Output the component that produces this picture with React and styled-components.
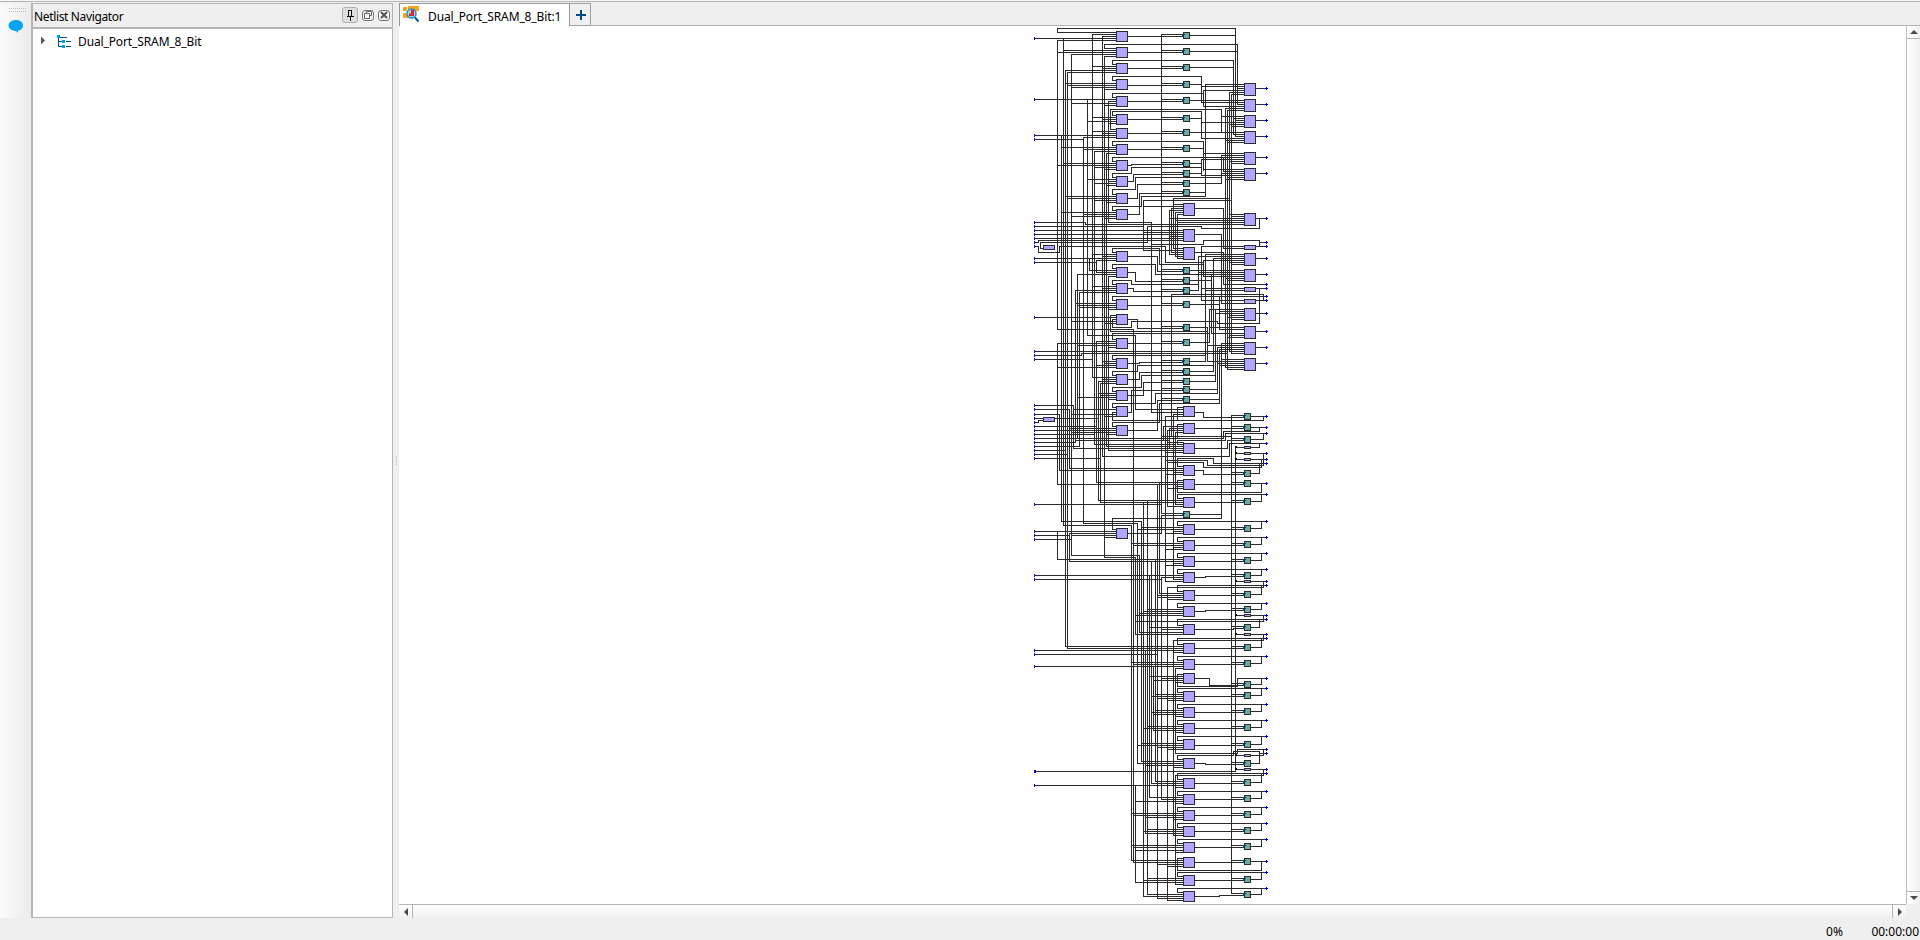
import React from "react";
import styled, { createGlobalStyle } from "styled-components";

const Global = createGlobalStyle`
  * { box-sizing: border-box; }
  body { margin: 0; background: #efefef; overflow: hidden; }
`;

const Window = styled.div`
  display: flex;
  flex-direction: column;
  width: 1920px;
  height: 940px;
  background: #efefef;
  color: #000;
  font: 12px/16px "Noto Sans", "Open Sans", sans-serif;
`;
const TopEdge = styled.div`
  height: 3px;
  flex: none;
  background: linear-gradient(#f4f4f4 1px, #b5b5b5 1px, #b5b5b5 2px, #efefef 2px);
`;
const Workspace = styled.div`
  display: flex;
  flex: 1;
  min-height: 0;
`;
const ToolStrip = styled.div`
  width: 31px;
  display: flex;
  flex-direction: column;
  align-items: center;
  padding: 5px 0 0 3px;
  background: linear-gradient(90deg, #fbfbfb, #ececec);
`;
const Navigator = styled.section`
  width: 362px;
  height: 915px;
  border: 1px solid #b5b5b5;
  border-left-width: 2px;
  background: #fff;
`;
const NavHeader = styled.header`
  height: 25px;
  display: flex;
  align-items: center;
  padding: 2px 2px 0 1px;
  background: #efefef;
  border-bottom: 2px solid #b5b5b5;
`;
const Label = styled.span`
  white-space: pre;
  flex: none;
  letter-spacing: ${(p) => p.$track || 0}px;
`;
const HeaderTools = styled.div`
  display: flex;
  align-items: center;
  gap: 4px;
  margin: -3px 0 0 auto;
`;
const ToolButton = styled.span`
  display: flex;
  align-items: center;
  justify-content: center;
  width: ${(p) => (p.$pressed ? 16 : 12)}px;
  height: ${(p) => (p.$pressed ? 16 : 11)}px;
  border: 1px solid ${(p) => (p.$pressed ? "#b0b0b0" : "#777")};
  border-radius: 3px;
  background: ${(p) => (p.$pressed ? "#dedede" : "#f4f4f4")};
`;
const TreeRow = styled.div`
  display: flex;
  align-items: center;
  height: 26px;
  padding-left: 8px;
`;
const Splitter = styled.div`
  width: 6px;
  display: flex;
  align-items: center;
  justify-content: center;
`;
const Editor = styled.main`
  flex: 1;
  display: flex;
  flex-direction: column;
  height: 915px;
`;
const TabBar = styled.div`
  display: flex;
  height: 23px;
  flex: none;
  border-bottom: 1px solid #b5b5b5;
`;
const Tab = styled.div`
  width: 171px;
  height: 24px;
  display: flex;
  align-items: center;
  gap: 9px;
  padding-left: 3px;
  background: #fff;
  border: 1px solid #999;
  border-bottom-color: #aaa;

  > span { padding-top: 3px; }
  > svg { margin-top: -2px; }
`;
const AddTab = styled.div`
  width: 21px;
  height: 23px;
  display: flex;
  align-items: center;
  justify-content: center;
  padding-left: 1px;
  border: 1px solid #a0a0a0;
  border-left: 0;
  background: #f0f0f0;
`;
const View = styled.div`
  flex: 1;
  display: flex;
  min-height: 0;
`;
const Canvas = styled.div`
  width: 1507px;
  padding-left: 621px;
  background: #fff;
  overflow: hidden;
`;
const VScroll = styled.div`
  width: 14px;
  display: flex;
  flex-direction: column;
  justify-content: space-between;
  border-left: 1px solid #bdbdbd;
  background: linear-gradient(90deg, #fff, #f0f0f0);
`;
const HScroll = styled.div`
  height: 14px;
  width: 1507px;
  flex: none;
  display: flex;
  justify-content: space-between;
  border-top: 1px solid #b5b5b5;
  background: linear-gradient(#fff, #f0f0f0);
`;
const ScrollButton = styled.div`
  width: 14px;
  height: 13px;
  display: flex;
  align-items: center;
  justify-content: center;
  border: 0 solid #b5b5b5;
  border-${(p) => p.$edge}-width: 1px;
`;
const StatusBar = styled.footer`
  height: 22px;
  flex: none;
  display: flex;
  justify-content: flex-end;
  align-items: center;
  gap: 28px;
  padding: 6px 1px 0 0;
`;

/* The schematic is laid out on a grid of thirds of a pixel. Each sheet starts
   at its own offset. A wire is "x y x y ...": a start point, then alternating
   horizontal and vertical moves. */
const sheets = [
  {
    top: 0,
    left: [33, 81, 129, 177, 228, 282, 324, 372, 420],
    mid: [], right: [189, 237, 285, 333, 396, 444],
    regs: [36, 84, 132, 183, 231, 285, 327, 375, 420], outRegs: [],
    bars: [], chips: [],
    wires: `289 37 112 25 646 349 673|510 46 646|289 43 217 450|289 49 247 450|43 55 289|289 61 112 450
289 85 253 73 652 253 673|130 91 289|112 97 289|289 103 154 450|289 109 253 450|130 55 130 450|510 94 652
289 133 277 121 640 343 673|217 139 289|247 145 289|289 151 136 450|289 157 142 450|510 142 640
289 181 277 169 544 247 673|136 190 289|142 196 289|154 202 289|253 208 289|510 193 544|544 199 673
673 193 556 450|673 211 550 259 673|289 232 277 220 550|43 238 289|289 244 265 450|154 250 289|253 256 289
510 241 673|202 238 202 450|289 286 277 274 544 355 673|217 292 289|247 298 289|202 304 289|265 310 289
510 295 544|544 307 673|289 328 271 268 604 337|217 334 289|247 340 289|43 346 289|289 352 190 450
510 337 673|604 289 673|43 358 190|124 346 124 450|289 376 277 364 550 450|124 382 289|190 388 289
289 394 223 450|289 400 259 450|510 385 550|289 424 277 412 673|130 430 289|112 436 289|223 442 289|253 448 289
324 436 334 433 495|510 430 544|673 418 544 466 673|652 205 673|673 217 628 450|673 223 634 450
673 265 616 450|673 271 622 450|640 295 673|646 301 673|628 313 673|634 319 673|616 361 673|622 367 673
550 400 673|673 406 604 490|610 412 610 454 673|628 424 673|634 430 673|550 448 673|424 43 424 450
324 49 495|324 97 495|324 145 495|324 196 495|324 244 495|324 298 495|324 340 495|324 388 495
708 205 740|708 253 740|708 301 740|708 349 740|708 412 740`,
  },
  {
    top: 435,
    left: [33, 84, 132, 258, 306, 354, 402], mid: [], midTall: [114, 192, 246],
    right: [144, 264, 312, 429],
    regs: [15, 45, 72, 306, 336, 366, 408], outRegs: [],
    bars: [[69, 240], [672, 240], [672, 366], [672, 402]], chips: [],
    wires: `112 0 112 450|124 0 124 450|130 0 130 450|136 0 136 450|142 0 142 450|154 0 154 450|190 0 190 450
202 0 202 450|217 0 217 450|223 0 223 450|247 0 247 450|253 0 253 450|259 0 259 450|265 0 265 172 394 450|424 0 424 450
616 0 616 450|622 0 622 450|628 0 628 450|634 0 634 450|289 37 277 25 334 7 544|202 43 289|265 49 289|223 55 289|259 61 289
324 49 340 28 495|510 25 544|550 0 550 13 673|604 25 673|622 37 673|616 43 673|708 25 740
289 88 277 73 346 37 604 55 510|324 100 352 58 495|136 94 289|142 100 289|223 106 289|259 112 289
289 136 277 124 364 94 556 0|510 82 556|324 148 358 85 495|124 142 289|190 148 289|154 154 289|253 160 289
628 100 460 250 490|634 106 370 256 490|460 118 490|370 124 490|490 130 454 262 490|490 136 448 268 490|490 142 466 274 490|490 148 472 280 490
524 130 610 250 673|628 148 673|634 154 673|448 160 673|466 166 673|472 172 673|460 178 673|708 160 740
43 172 196 178 460|43 184 370|382 232 382 184 544 190 718 160|43 196 490|370 202 490|43 208 490|448 214 490|43 220 490
43 232 55 226 490|69 250 61 232 382|43 244 55 262 118 244 436 292 550|55 226 55 232|394 238 550 226 718 244|718 232 740|708 244 740
673 244 544 406 673|524 208 604 415 673|524 262 610 358 740|289 262 277 250 418 298 550 286 673
217 268 289|247 274 289|43 280 289|43 292 229|289 286 229 322 289|208 280 208 316 289|324 274 412 319 495
673 268 556 450|673 274 535 376 510|673 280 580 450|550 298 550 334 673|628 292 673|634 298 673
510 316 673|535 322 673|616 340 673|622 346 673|708 280 740|708 328 740
289 310 277 298 406 328 673|574 328 574 450|289 328 172 450|289 334 265 450|324 322 346 349 495|510 346 574
289 358 277 346 334 358 535|217 364 289|247 370 289|289 376 166 450|289 382 178 450|324 370 340 379 495
289 406 277 394 740|166 415 289|172 421 289|178 427 289|265 433 289|324 421 495|510 418 598
454 450 454 388 730 406|544 370 673|556 376 673|708 370 740|718 370 718 450|708 406 740
673 433 568 450|673 439 598 450|598 394 598 439|673 445 586 450|708 445 740`,
  },
  {
    top: 870,
    left: [12, 84, 144, 192, 240, 288, 345], mid: [288, 339, 399], right: [48, 96, 144],
    regs: [42, 87, 144, 174, 204, 228, 258], outRegs: [309, 342, 378],
    bars: [[69, 321]], chips: [408, 426, 444],
    wires: `112 0 112 58 340 450|124 0 124 450|130 0 130 450|136 0 136 450|142 0 142 450|154 0 154 450|166 0 166 397
172 0 172 385 610 364 718 352|178 0 178 409|190 0 190 450|202 0 202 76 346 298 490|217 0 217 203 289|223 0 223 403 466
247 0 247 439 628 400 740|253 0 253 450|259 0 259 409 490|265 0 265 421 490|394 0 394 307 490|424 0 424 450|454 0 454 379
43 22 289|289 16 271 64 562|289 28 277 52 334 34 592 40 718 -10|154 34 289|253 40 289|324 28 352 55 495|510 52 562
289 88 277 70 568|568 0 568 97 510|574 0 574 70 673|580 0 580 184 510|586 0 586 214 510|556 0 556 154 510|229 94 289|229 94 229 450
289 100 112 450|172 106 289|265 112 289|324 100 495|43 124 622|43 136 184 130 622|43 148 217
289 148 277 136 556|247 154 289|253 160 289|229 166 289|112 172 289|324 160 358 157 495
289 196 277 184 352 166 580|247 209 289|289 215 235 450|289 221 241 450|324 208 358 187 495
289 244 277 232 364 196 586|235 250 289|241 256 289|172 262 289|265 268 289|324 256 370 217 495
289 292 277 280 406 250 592|160 298 289|289 307 277 331 472|154 313 289|253 319 289|324 307 334 241 495
289 349 277 337 418 280 598|148 355 289|118 361 289|154 367 289|259 373 289|324 361 412 271 495
598 4 673|586 10 673|628 16 673|622 22 673|634 28 673|708 10 740|568 52 673|598 58 673|628 76 673|622 82 673|708 64 740
673 100 604 450|562 106 673|673 112 592 250|673 118 598 280|628 124 673|634 130 673|708 112 740|628 0 628 124|634 0 634 130|598 0 598 58
604 148 673|562 52 562 154 673|592 160 673|598 166 673|616 0 616 172 673|622 0 622 178 673|708 160 740
510 238 592|510 268 598|43 286 160 415 454|43 298 148 450|43 313 118 450|43 325 69|105 325 235|43 337 55 331 69
43 349 229|43 361 289|43 373 223|43 385 460|43 397 166|43 409 178|43 421 136|43 433 142|43 445 241
166 391 448|424 379 634|490 292 472 331 730 319|490 313 460 450|490 319 436 450|524 307 550 322 678|693 319 740
490 343 472 385|490 349 430 391|490 355 448 415 490|490 361 442 450|490 367 466 450|524 355 678|693 352 740
490 403 472 391 616 370 740|442 397 490|436 427 490|524 415 622 391 678|693 388 730 370
634 316 634 450|646 410 646 450|648 411 673|693 412 718 400|648 430 673|693 430 740|730 430 730 466|693 448 740`,
  },
  {
    top: 1305,
    left: [219], mid: [30, 72, 126, 207, 255, 303, 351, 405], right: [],
    regs: [168], outRegs: [45, 75, 129, 210, 258, 306, 351, 408],
    bars: [], chips: [9, 375],
    wires: `43 10 241|490 34 472 10 580 25 740|436 16 562 31 730 0|442 22 550 37 724 13|148 0 148 40 490|118 0 118 46 490|460 52 490|436 58 490
524 46 550 58 678|693 55 718 25|490 76 472 112 724 85|229 0 229 82 490|112 0 112 88 490|466 94 490|442 100 490|524 88 678|693 85 740
490 130 472 118 740|235 0 235 136 490|241 0 241 142 490|466 0 466 148 490|442 0 442 154 490|524 142 678|693 139 724 118
43 148 424|424 0 424 175|324 235 424 181 495|510 178 604|289 223 277 190 604 0
124 0 124 199 364 450|190 0 190 205 352 450|130 0 130 211 334 450|253 0 253 307 346 450|154 0 154 301 358 450
43 229 289|43 241 148|289 235 148 319 490|43 253 154|154 241 289|253 247 289|112 229 112 313 490|136 0 136 450|142 0 142 450|340 0 340 450
370 142 370 450|382 136 382 450|388 361 388 450|394 319 394 450|406 313 406 450|412 88 412 450|418 82 418 415 490
490 211 472 199 740|364 217 490|352 223 490|460 229 490|436 235 490|524 223 678|693 220 724 199
490 259 472 247 740|334 265 490|340 271 490|460 277 490|436 283 490|524 271 678|693 268 724 247
490 307 472 295 740|460 325 490|436 331 490|524 319 678|693 316 724 295
490 355 472 343 740|43 361 490|490 367 424 450|460 0 460 373 490|436 0 436 379 490|524 367 556 364 678|693 361 724 343
43 373 424|490 409 472 391 740|442 450 442 397 730 379|412 421 490|412 427 490|442 433 490|524 421 678|693 418 724 391
634 0 634 450|646 0 646 450|648 13 673|693 13 740|648 379 673|693 379 740`,
  },
  {
    top: 1740,
    left: [], mid: [18, 72, 129, 177, 219, 273, 321, 369, 417], right: [],
    regs: [], outRegs: [18, 72, 132, 180, 243, 276, 324, 372, 423],
    bars: [], chips: [42, 99],
    wires: `334 0 334 450|340 0 340 450|352 0 352 450|364 0 364 450|370 0 370 450|382 0 382 450|388 0 388 450|394 0 394 450|406 0 406 450|412 0 412 450
424 0 424 450|442 0 442 450|634 0 634 450|646 0 646 450|136 0 136 139 490|142 0 142 145 490|376 151 376 450|400 199 400 391 490
490 22 472 10 740|382 28 490|370 34 490|358 40 490|346 46 490|524 34 556 31 678|693 28 724 10|648 46 673|693 46 740
346 64 730 46|490 76 472 58 740|388 82 490|424 88 490|358 0 358 97 490|346 0 346 103 490|524 88 640 85 678|693 82 718 58|648 103 673|693 103 740
490 133 472 115 740|460 450 460 121 730 103|43 151 490|460 157 490|524 145 678|693 142 724 115|43 163 412
490 181 472 169 740|334 187 490|340 193 490|43 199 490|490 205 466 450|524 193 678|693 190 724 169
490 223 472 259 652 235 740|388 229 490|424 235 490|400 241 490|466 247 490|524 235 568 256 678|693 253 724 235
490 277 472 265 740|406 283 490|394 289 490|412 295 490|442 301 490|524 289 678|693 286 724 265
490 325 472 313 740|406 331 490|394 337 490|400 343 490|466 349 490|524 337 678|693 334 724 313
490 373 472 361 740|382 379 490|370 385 490|466 397 490|524 385 678|693 382 724 361
490 421 472 409 740|364 430 490|352 436 490|412 442 490|442 448 490|524 436 678|693 433 724 409|652 460 652 448 740`,
  },
  {
    top: 2190,
    left: [], mid: [24, 84, 132, 180, 228, 276, 321, 375, 423], right: [],
    regs: [], outRegs: [30, 87, 135, 183, 231, 279, 324, 378, 423],
    bars: [], chips: [12, 54],
    wires: `466 0 466 10 652|490 28 472 16 640 4 718 40 693|718 10 740|648 16 673|693 16 730 -2|364 0 364 34 490|352 0 352 40 490|376 46 490|460 52 490
524 40 556 43 678|46 64 646 0|648 58 673|693 58 740|730 58 730 76 466 403 490|43 106 490|346 106 346 397 490
490 88 472 70 740|406 0 406 94 490|394 0 394 100 490|466 112 490|524 100 678|693 97 724 70
490 136 472 124 740|388 0 388 142 490|424 0 424 148 490|346 154 490|466 160 490|524 148 678|693 145 724 124
490 184 472 172 740|334 190 490|340 196 490|376 202 490|460 208 490|524 196 678|693 193 724 172
490 232 472 220 740|382 238 490|370 244 490|376 0 376 250 490|460 0 460 256 490|524 244 678|693 241 724 220
490 280 472 268 740|334 286 490|340 292 490|346 301 490|466 307 490|524 292 678|693 289 724 268
490 325 472 361 724 334|334 0 334 331 490|340 0 340 337 490|412 343 490|442 349 490|524 337 678|693 334 740
490 379 472 367 740|382 385 490|370 391 490|524 391 678|693 388 724 367
490 427 472 415 740|382 0 382 433 490|370 0 370 439 490|412 0 412 445 490|442 0 442 451 490|524 439 598 436 678|693 433 724 415|634 0 634 430`,
  },
];

const cell = (v) => Math.floor(v / 3);

function Wires({ top, source }) {
  let d = "";
  let ports = "";
  let pins = "";
  source.split(/[|\n]/).forEach((item) => {
    const v = item.trim().split(/\s+/).map(Number);
    const X = (n) => cell(n) + 0.5;
    const Y = (n) => cell(n + top) + 0.5;
    d += `M${X(v[0])} ${Y(v[1])}`;
    let x = v[0];
    let y = v[1];
    const edges = [[x, y]];
    for (let i = 2; i < v.length; i++) {
      if (i % 2) {
        y = v[i];
        d += `V${Y(y)}`;
      } else {
        x = v[i];
        d += `H${X(x === 740 ? 736 : x)}`;
      }
    }
    edges.push([x, y]);
    edges.forEach(([ex, ey]) => {
      const px = cell(ex);
      const py = cell(ey + top);
      if (ex === 740) ports += `M245 ${py}h3v1h-3zM246 ${py - 1}h1v3h-1z`;
      if (ex === 43) ports += `M14 ${py - 1}h1v1h-1zM15 ${py}h1v1h-1zM14 ${py + 1}h1v1h-1z`;
      if (ex === 46) ports += `M14 ${py - 1}h2v1h-1v1h1v1h-2z`;
      if (ex === 289 || ex === 490 || ex === 673) pins += `M${px - 1} ${py}h1v1h-1z`;
      if (ex === 324 || ex === 524 || ex === 708) pins += `M${px} ${py}h1v1h-1z`;
    });
  });
  return (
    <>
      <path d={d} fill="none" stroke="#2b2b2b" strokeLinecap="square" strokeWidth="1" />
      <path d={pins} fill="#003c5e" />
      <path d={ports} fill="#0000ff" />
    </>
  );
}

function Block({ x, y, w, h, fill }) {
  return <rect x={cell(x) + 0.5} y={cell(y) + 0.5} width={w - 1} height={h - 1} fill={fill} stroke="#2b2b2b" />;
}

function Register({ x, y }) {
  const bx = cell(x);
  const by = cell(y);
  const bus = x < 600 ? 141 : 211;
  return (
    <g>
      <path d={`M${bus} ${by + 2.5}H${bx + 1}`} stroke="#2b2b2b" />
      <Block x={x} y={y} w={7} h={7} fill="#6fa8a8" />
      <path d={`M${bx - 1} ${by + 2}h1v3h-1z`} fill="#004a78" />
      <path d={`M${bx} ${by + 2}h2v1h-2z`} fill="#123c4c" />
    </g>
  );
}

function Schematic() {
  const violet = "#b0a6ff";
  return (
    <svg width="270" height="884" viewBox="0 6 270 884" shapeRendering="crispEdges" display="block">
      {sheets.map((s) => (
        <Wires key={s.top} top={s.top} source={s.wires} />
      ))}
      {sheets.map((s) => (
        <g key={s.top}>
          {s.left.map((y) => <Block key={`l${y}`} x={288} y={y + s.top} w={12} h={11} fill={violet} />)}
          {s.mid.map((y) => <Block key={`m${y}`} x={489} y={y + s.top} w={12} h={11} fill={violet} />)}
          {(s.midTall || []).map((y) => <Block key={`t${y}`} x={489} y={y + s.top} w={12} h={13} fill={violet} />)}
          {s.right.map((y) => <Block key={`r${y}`} x={672} y={y + s.top} w={12} h={13} fill={violet} />)}
          {s.bars.map(([x, y]) => <Block key={`b${x}-${y}`} x={x} y={y + s.top} w={12} h={5} fill={violet} />)}
          {s.chips.map((y) => (
            <g key={`c${y}`}>
              <Block x={672} y={y + s.top} w={7} h={3} fill={violet} />
              <rect x="215" y={cell(y + s.top)} width="2" height="2" fill="#000" />
            </g>
          ))}
          {s.regs.map((y) => <Register key={`g${y}`} x={489} y={y + s.top} />)}
          {s.outRegs.map((y) => <Register key={`o${y}`} x={672} y={y + s.top} />)}
        </g>
      ))}
    </svg>
  );
}

const Arrow = ({ d }) => (
  <svg width="8" height="8" viewBox="0 0 8 8"><path d={d} fill="#4a4a4a" /></svg>
);

export default function App() {
  return (
    <Window>
      <Global />
      <TopEdge />
      <Workspace>
        <ToolStrip>
          <svg width="18" height="26" viewBox="0 0 18 26">
            <path d="M1 .5h17M1 3.5h17" stroke="#bdbdbd" strokeDasharray="1 1" />
            <path d="M8 12C3.500 12 .5 14.500 .5 17.500S4 23 8 23l2 2v-2.300c3-.5 5-2.500 5-5.200C15 14.500 12.500 12 8 12z" fill="#05a5f5" />
          </svg>
        </ToolStrip>
        <Navigator>
          <NavHeader>
            <Label $track={-0.35}>Netlist Navigator</Label>
            <HeaderTools>
              <ToolButton $pressed>
                <svg width="8" height="11" viewBox="0 0 8 11" shapeRendering="crispEdges">
                  <path d="M2.500 .5h3v6h-3zM.5 6.500h7M4.500 7v4M5.500 1v5" fill="none" stroke="#111" />
                </svg>
              </ToolButton>
              <ToolButton>
                <svg width="8" height="8" viewBox="0 0 8 8">
                  <path d="M2.500 2.500v-2h5v4h-2M.5 2.500h5v5h-5z" fill="none" stroke="#666" />
                </svg>
              </ToolButton>
              <ToolButton>
                <svg width="8" height="8" viewBox="0 0 8 8">
                  <path d="M1 1l6 6M7 1l-6 6" stroke="#555" strokeWidth="2" />
                </svg>
              </ToolButton>
            </HeaderTools>
          </NavHeader>
          <TreeRow>
            <svg width="37" height="16" viewBox="0 0 37 16">
              <path d="M0 2.500l4 4-4 4z" fill="#555" />
              <path d="M17.500 3v9.500H21M17.500 7.500H21M19 3.500h7M25 7.500h5M25 12.500h5" fill="none" stroke="#00508c" />
              <path d="M16 1h3v3h-3zM21 6h3v3h-3zM21 11h3v3h-3z" fill="#00a0e0" />
            </svg>
            <Label $track={-0.12}>Dual_Port_SRAM_8_Bit</Label>
          </TreeRow>
        </Navigator>
        <Splitter>
          <svg width="3" height="9" viewBox="0 0 3 9"><path d="M1.500 0v9" stroke="#bbb" strokeDasharray="1 1" /></svg>
        </Splitter>
        <Editor>
          <TabBar>
            <Tab>
              <svg width="16" height="17" viewBox="0 0 16 17">
                <path d="M0 1h4v4H0zM5 0h11v5H5zM0 7h5v5H0z" fill="#f9a51b" />
                <circle cx="8.500" cy="7.500" r="4.500" fill="#91d8f0" stroke="#2094cc" strokeWidth="1.500" />
                <path d="M8 4h3v6H6V7.500h2z" fill="#e0232e" />
                <path d="M12 11.500l3.500 4" stroke="#075592" strokeWidth="2" />
              </svg>
              <Label $track={-0.12}>Dual_Port_SRAM_8_Bit:1</Label>
            </Tab>
            <AddTab>
              <svg width="10" height="10" viewBox="0 0 10 10"><path d="M5 0v10M0 5h10" stroke="#004a86" strokeWidth="2" /></svg>
            </AddTab>
          </TabBar>
          <View>
            <Canvas><Schematic /></Canvas>
            <VScroll>
              <ScrollButton $edge="bottom"><Arrow d="M0 6l4-4 4 4z" /></ScrollButton>
              <ScrollButton $edge="top"><Arrow d="M0 2l4 4 4-4z" /></ScrollButton>
            </VScroll>
          </View>
          <HScroll>
            <ScrollButton $edge="right"><Arrow d="M6 0L2 4l4 4z" /></ScrollButton>
            <ScrollButton $edge="left"><Arrow d="M2 0l4 4-4 4z" /></ScrollButton>
          </HScroll>
        </Editor>
      </Workspace>
      <StatusBar>
        <Label $track={0.3}>0%</Label>
        <Label>00:00:00</Label>
      </StatusBar>
    </Window>
  );
}
